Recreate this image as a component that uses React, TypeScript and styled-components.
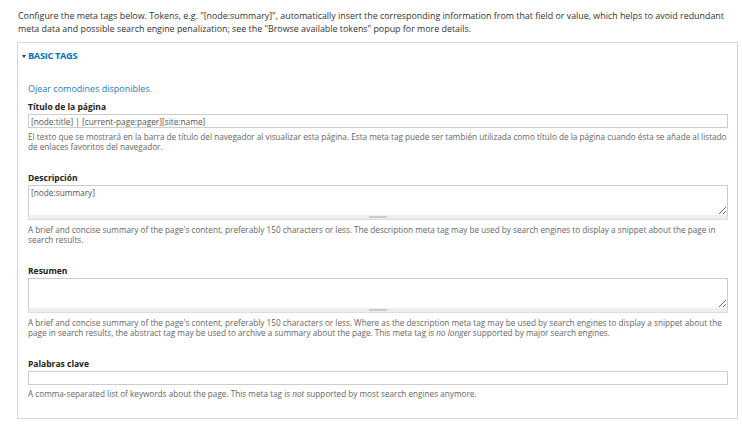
import * as React from 'react';
import styled, {createGlobalStyle} from 'styled-components';

const GlobalStyle = createGlobalStyle`
  html, body {
    margin: 0;
    padding: 0;
    background: #fff;
  }
  body {
    font-family: "Open Sans", "Liberation Sans", sans-serif;
    color: #333;
  }
`;

const Page = styled.div`
  width: 742px;
  height: 426px;
  box-sizing: border-box;
  padding: 9px 5px 0 17px;
  overflow: hidden;
`;

const Intro = styled.p`
  margin: 0 0 7px 1px;
  font-size: 8.9px;
  line-height: 13px;
  color: #333;
  white-space: nowrap;
`;

const Fieldset = styled.div`
  width: 721px;
  height: 377px;
  box-sizing: border-box;
  border: 1px solid #d6d6d6;
  padding: 8px 9px 0 10px;
`;

const Legend = styled.div`
  display: flex;
  align-items: center;
  gap: 2px;
  margin-left: -6px;
  font-size: 9.2px;
  line-height: 10px;
  font-weight: 700;
  color: #0074bd;
  letter-spacing: -0.3px;
`;

const Caret = styled.span`
  width: 0;
  height: 0;
  border-left: 2px solid transparent;
  border-right: 2px solid transparent;
  border-top: 3px solid #333;
`;

const TokenLink = styled.a`
  display: block;
  margin: 23px 0 8px;
  font-size: 9px;
  line-height: 10px;
  color: #2b7bb9;
  text-decoration: none;
`;

const FormItem = styled.div`
  margin-bottom: 21px;
`;

const Label = styled.label`
  display: block;
  margin-bottom: 2px;
  font-size: 8.5px;
  line-height: 10px;
  font-weight: 700;
  color: #222;
`;

const TextInput = styled.input`
  display: block;
  width: 700px;
  height: 14px;
  box-sizing: border-box;
  margin: 0;
  padding: 0 2px;
  border: 1px solid #ccc;
  font-family: inherit;
  font-size: 8.3px;
  color: #555;
  outline: none;
`;

const TextArea = styled.textarea`
  display: block;
  width: 700px;
  height: 30px;
  box-sizing: border-box;
  margin: 0;
  padding: 1px 2px;
  border: 1px solid #ccc;
  border-bottom: none;
  font-family: inherit;
  font-size: 8.3px;
  color: #555;
  resize: vertical;
  outline: none;
`;

const Grippie = styled.div`
  width: 700px;
  height: 5px;
  box-sizing: border-box;
  background: #eee;
  border: 1px solid #ddd;
  border-top: none;
  display: flex;
  justify-content: center;
  align-items: center;
`;

const GripMark = styled.span`
  width: 18px;
  height: 2px;
  background: #ccc;
`;

const Help = styled.div<{$gap?: number}>`
  margin-top: ${(p) => p.$gap ?? 4}px;
  font-size: 8.2px;
  line-height: 10px;
  color: #666;
  white-space: nowrap;
`;

interface FieldProps {
  label: string;
  value?: string;
  multiline?: boolean;
  children: React.ReactNode;
}

const Field: React.FunctionComponent<FieldProps> = ({label, value, multiline, children}) => (
  <FormItem>
    <Label>{label}</Label>
    {multiline ? (
      <>
        <TextArea defaultValue={value} />
        <Grippie><GripMark /></Grippie>
      </>
    ) : (
      <TextInput defaultValue={value} />
    )}
    <Help $gap={multiline ? 5 : 4}>{children}</Help>
  </FormItem>
);

const App: React.FunctionComponent = () => (
  <>
    <GlobalStyle />
    <Page>
      <Intro>
        Configure the meta tags below. Tokens, e.g. "[node:summary]", automatically insert the corresponding
        information from that field or value, which helps to avoid redundant<br />
        meta data and possible search engine penalization; see the "Browse available tokens" popup for more details.
      </Intro>
      <Fieldset>
        <Legend><Caret />BASIC TAGS</Legend>
        <TokenLink href="#">Ojear comodines disponibles.</TokenLink>
        <Field label="Título de la página" value="[node:title] | [current-page:pager][site:name]">
          El texto que se mostrará en la barra de título del navegador al visualizar esta página. Esta meta tag
          puede ser también utilizada como título de la página cuando ésta se añade al listado<br />
          de enlaces favoritos del navegador.
        </Field>
        <Field label="Descripción" value="[node:summary]" multiline>
          A brief and concise summary of the page's content, preferably 150 characters or less. The description
          meta tag may be used by search engines to display a snippet about the page in<br />
          search results.
        </Field>
        <Field label="Resumen" multiline>
          A brief and concise summary of the page's content, preferably 150 characters or less. Where as the
          description meta tag may be used by search engines to display a snippet about the<br />
          page in search results, the abstract tag may be used to archive a summary about the page. This meta tag
          is <em>no longer</em> supported by major search engines.
        </Field>
        <Field label="Palabras clave">
          A comma-separated list of keywords about the page. This meta tag is <em>not</em> supported by most
          search engines anymore.
        </Field>
      </Fieldset>
    </Page>
  </>
);

export default App;
